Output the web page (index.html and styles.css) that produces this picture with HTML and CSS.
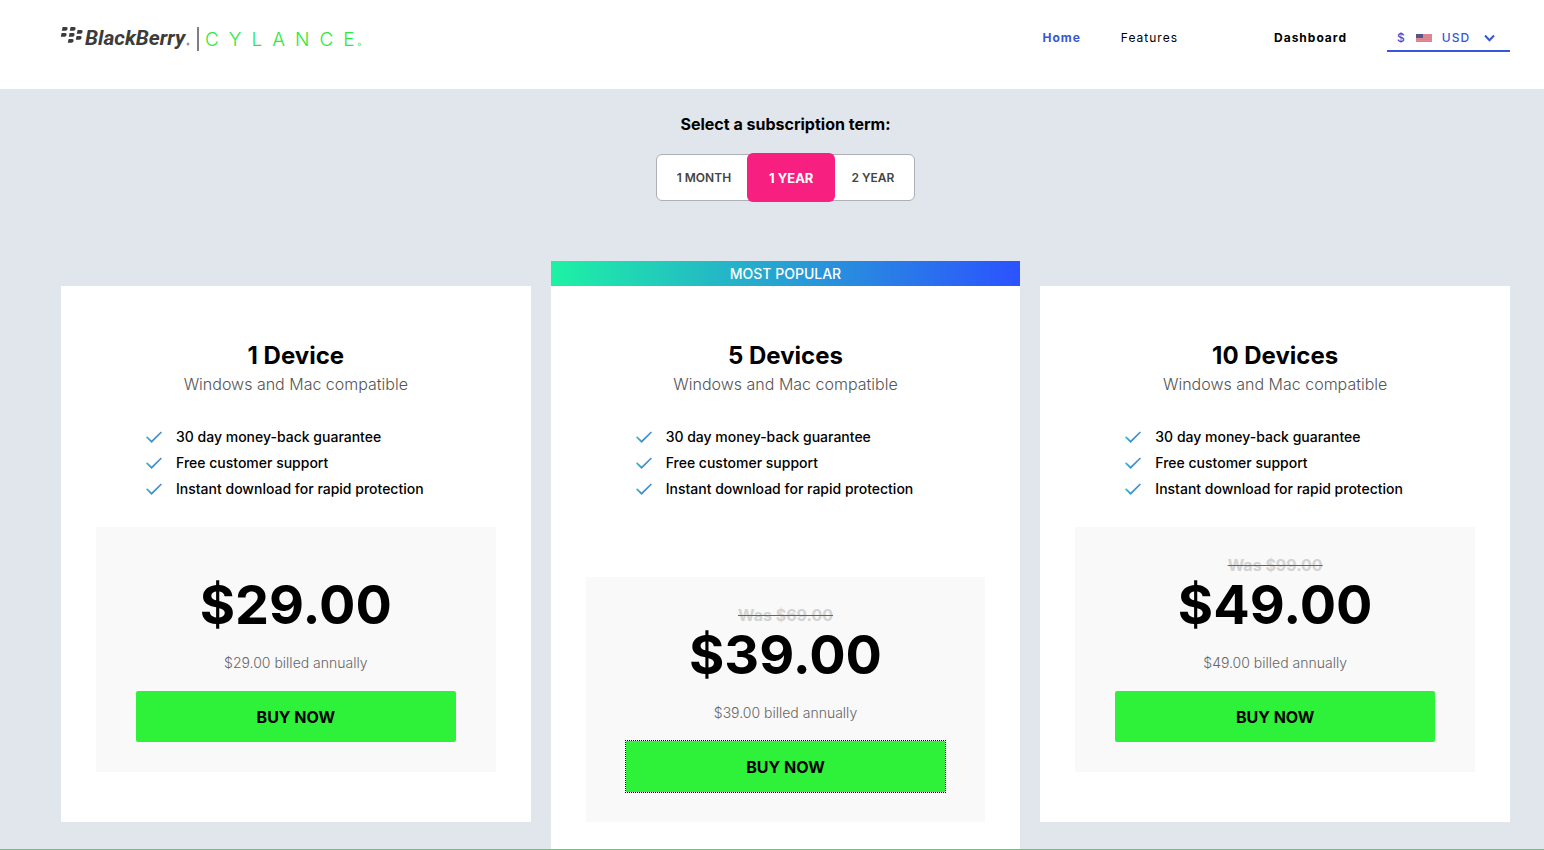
FILE: index.html
```html
<!DOCTYPE html>
<html lang="en">

<head>
    <meta charset="UTF-8">
    <meta name="viewport" content="width=device-width, initial-scale=1.0">
    <title>BlackBerry Cylance</title>
    <link rel="stylesheet" href="styles.css">
</head>

<body>
    <!-- shared icon shapes -->
    <svg class="defs" width="0" height="0" aria-hidden="true">
        <defs>
            <linearGradient id="tick" x1="0" y1="0" x2="1" y2="0">
                <stop offset="0" stop-color="#2fc3c0" />
                <stop offset="0.35" stop-color="#3a8fd6" />
                <stop offset="1" stop-color="#4a90d0" />
            </linearGradient>
            <symbol id="check" viewBox="0 0 16 12">
                <path d="M.6 5.8 5.6 10.7 15.4 1" fill="none" stroke="url(#tick)" stroke-width="1.7" />
            </symbol>
        </defs>
    </svg>

    <header class="header">
        <a class="logo" href="#">
            <svg width="320" height="34" viewBox="0 0 320 34" role="img" aria-label="BlackBerry Cylance">
                <g fill="#3b3b3b">
                    <path id="seed" d="M1.6 2h3.6q1.800 0 1.400 1.900t-2.300 1.800H.8z" />
                    <use href="#seed" x="8" />
                    <use href="#seed" x="-1" y="6" />
                    <use href="#seed" x="7" y="6" />
                    <use href="#seed" x="15" y="3" />
                    <use href="#seed" x="14" y="9" />
                    <use href="#seed" x="6" y="12" />
                </g>
                <text class="logo-bb" x="24" y="20">BlackBerry</text>
                <circle cx="127" cy="19" r="1.5" fill="#999" />
                <path d="M137 2v24" stroke="#555" stroke-width="1.5" />
                <text class="logo-cy" x="144" y="21">CYLANCE</text>
                <circle cx="298.5" cy="19.5" r="1.2" fill="none" stroke="#2ee83a" stroke-width=".8" />
            </svg>
        </a>
        <nav class="nav">
            <a class="nav-link active" href="#">Home</a>
            <a class="nav-link" href="#">Features</a>
            <a class="nav-link dashboard" href="#">Dashboard</a>
            <label class="currency">
                <span>$</span>
                <svg width="16" height="8" viewBox="0 0 16 8" aria-hidden="true">
                    <path fill="#e08a93" d="M0 0h16v8H0z" />
                    <path stroke="#d97883" d="M0 1.5h16M0 3.5h16M0 5.5h16M0 7.5h16" stroke-width=".6" />
                    <path fill="#55558a" d="M0 0h7v4H0z" />
                </svg>
                <select aria-label="Currency">
                    <option>USD</option>
                </select>
                <svg class="chevron" width="12" height="8" viewBox="0 0 12 8" aria-hidden="true">
                    <path d="M1 1.5 5.5 6.2 10 1.5" fill="none" stroke="#3657d6" stroke-width="2" />
                </svg>
            </label>
        </nav>
    </header>

    <main class="main">
        <fieldset class="term">
            <legend>Select a subscription term:</legend>
            <div class="term-options">
                <label><input type="radio" name="term"><span>1 MONTH</span></label>
                <label><input type="radio" name="term" checked><span>1 YEAR</span></label>
                <label><input type="radio" name="term"><span>2 YEAR</span></label>
            </div>
        </fieldset>

        <div class="plans">
            <section class="plan">
                <div class="card">
                    <h2>1 Device</h2>
                    <p class="compat">Windows and Mac compatible</p>
                    <ul class="features">
                        <li><svg width="16" height="12"><use href="#check" /></svg>30 day money-back guarantee</li>
                        <li><svg width="16" height="12"><use href="#check" /></svg>Free customer support</li>
                        <li><svg width="16" height="12"><use href="#check" /></svg>Instant download for rapid protection</li>
                    </ul>
                    <div class="offer">
                        <div class="was"></div>
                        <div class="price">$29.00</div>
                        <p class="billed">$29.00 billed annually</p>
                        <button class="buy" type="button">BUY NOW</button>
                    </div>
                </div>
            </section>

            <section class="plan popular">
                <div class="banner">MOST POPULAR</div>
                <div class="card">
                    <h2>5 Devices</h2>
                    <p class="compat">Windows and Mac compatible</p>
                    <ul class="features">
                        <li><svg width="16" height="12"><use href="#check" /></svg>30 day money-back guarantee</li>
                        <li><svg width="16" height="12"><use href="#check" /></svg>Free customer support</li>
                        <li><svg width="16" height="12"><use href="#check" /></svg>Instant download for rapid protection</li>
                    </ul>
                    <div class="offer">
                        <div class="was"><s>Was $69.00</s></div>
                        <div class="price">$39.00</div>
                        <p class="billed">$39.00 billed annually</p>
                        <button class="buy focused" type="button">BUY NOW</button>
                    </div>
                </div>
            </section>

            <section class="plan">
                <div class="card">
                    <h2>10 Devices</h2>
                    <p class="compat">Windows and Mac compatible</p>
                    <ul class="features">
                        <li><svg width="16" height="12"><use href="#check" /></svg>30 day money-back guarantee</li>
                        <li><svg width="16" height="12"><use href="#check" /></svg>Free customer support</li>
                        <li><svg width="16" height="12"><use href="#check" /></svg>Instant download for rapid protection</li>
                    </ul>
                    <div class="offer">
                        <div class="was"><s>Was $99.00</s></div>
                        <div class="price">$49.00</div>
                        <p class="billed">$49.00 billed annually</p>
                        <button class="buy" type="button">BUY NOW</button>
                    </div>
                </div>
            </section>
        </div>
    </main>
</body>

</html>
```
FILE: styles.css
```css
* {
    padding: 0;
    margin: 0;
    box-sizing: border-box;
}

body {
    min-height: 100vh;
    display: flex;
    flex-direction: column;
    font-family: Inter, "Liberation Sans", sans-serif;
    color: #000;
    background: #fff;
}

.defs {
    position: absolute;
}

.header {
    display: flex;
    justify-content: space-between;
    align-items: flex-start;
    height: 89px;
    padding: 25px 34px 0 61px;
}

.logo svg {
    display: block;
    overflow: visible;
}

.logo-bb {
    font: italic 700 21px Roboto, "Liberation Sans", sans-serif;
    fill: #3b3b3b;
}

.logo-cy {
    font: 300 19px Inter, sans-serif;
    letter-spacing: 10px;
    fill: #2ee83a;
}

.nav {
    display: flex;
    align-items: flex-start;
    gap: 40px;
    font-size: 12px;
    line-height: 25px;
    letter-spacing: 1px;
}

.nav-link {
    color: #000;
    text-decoration: none;
}

.nav-link.active {
    color: #3657d6;
    font-weight: 700;
}

.nav-link.dashboard {
    margin-left: 56px;
    font-weight: 700;
}

.currency {
    display: flex;
    align-items: center;
    gap: 10px;
    width: 123px;
    height: 27px;
    padding: 0 14px 0 10px;
    border-bottom: 2px solid #3657d6;
    color: #3657d6;
    font-weight: 500;
}

.currency select {
    flex: 1;
    min-width: 0;
    appearance: none;
    border: 0;
    background: none;
    color: inherit;
    font: inherit;
    letter-spacing: inherit;
}

.main {
    flex: 1;
    display: flex;
    flex-direction: column;
    padding: 23px 34px 0 61px;
    background: #e1e6ed;
    border-bottom: 1px solid #4fd75e;
}

.term {
    display: flex;
    flex-direction: column;
    align-items: center;
    border: 0;
}

.term legend {
    margin: 0 auto 18px;
    font-size: 16px;
    font-weight: 700;
    line-height: 24px;
}

.term-options {
    display: flex;
    height: 47px;
    padding: 0 4px;
    border: 1px solid #adb0b4;
    border-radius: 6px;
    background: #fff;
}

.term-options label {
    display: flex;
}

.term-options input {
    position: absolute;
    opacity: 0;
}

.term-options span {
    display: flex;
    align-items: center;
    padding: 0 16px;
    color: #444;
    font-size: 12px;
    font-weight: 600;
}

.term-options input:checked + span {
    margin: -2px 0;
    padding: 0 22px;
    border-radius: 6px;
    background: #f71f80;
    color: #fff;
    font-size: 13px;
    font-weight: 700;
}

.plans {
    flex: 1;
    display: grid;
    grid-template-columns: repeat(3, 1fr);
    gap: 20px;
    margin-top: 60px;
}

.plan {
    padding: 25px 0 27px;
}

.popular {
    display: flex;
    flex-direction: column;
    padding: 0;
}

.banner {
    height: 25px;
    background: linear-gradient(90deg, #1df2a4, #2898d8 55%, #2b52ff);
    color: #fff;
    font-size: 14px;
    font-weight: 500;
    line-height: 25px;
    text-align: center;
}

.card {
    padding: 52px 35px 50px;
    background: #fff;
    text-align: center;
}

.card h2 {
    font-size: 24px;
    font-weight: 700;
    line-height: 36px;
}

.compat {
    color: #555;
    font-size: 16px;
    font-weight: 300;
    line-height: 20px;
}

.features {
    margin: 30px 0 25px;
    padding-left: 50px;
    list-style: none;
    font-size: 14px;
    font-weight: 500;
    line-height: 26px;
    text-align: left;
}

.features li {
    display: flex;
    align-items: center;
    gap: 14px;
}

.offer {
    padding: 28px 40px 30px;
    background: #f9f9f9;
}

.popular .card {
    flex: 1;
    padding-bottom: 27px;
}

.popular .features {
    margin-bottom: 75px;
}

.was {
    height: 20px;
    color: #d3d3d3;
    font-size: 16px;
    font-weight: 700;
    line-height: 20px;
}

.was s {
    text-decoration: line-through 1px #cf2a78;
}

.price {
    font-size: 54px;
    font-weight: 700;
    line-height: 60px;
}

.billed {
    margin: 16px 0;
    color: #666;
    font-size: 14px;
    font-weight: 300;
    line-height: 24px;
}

.buy {
    display: block;
    width: 100%;
    height: 51px;
    border: 0;
    border-radius: 2px;
    background: #2ef239;
    color: #000;
    font: inherit;
    font-size: 16px;
    font-weight: 700;
}

.buy.focused {
    border-radius: 0;
    outline: 1px dotted #000;
}
```
